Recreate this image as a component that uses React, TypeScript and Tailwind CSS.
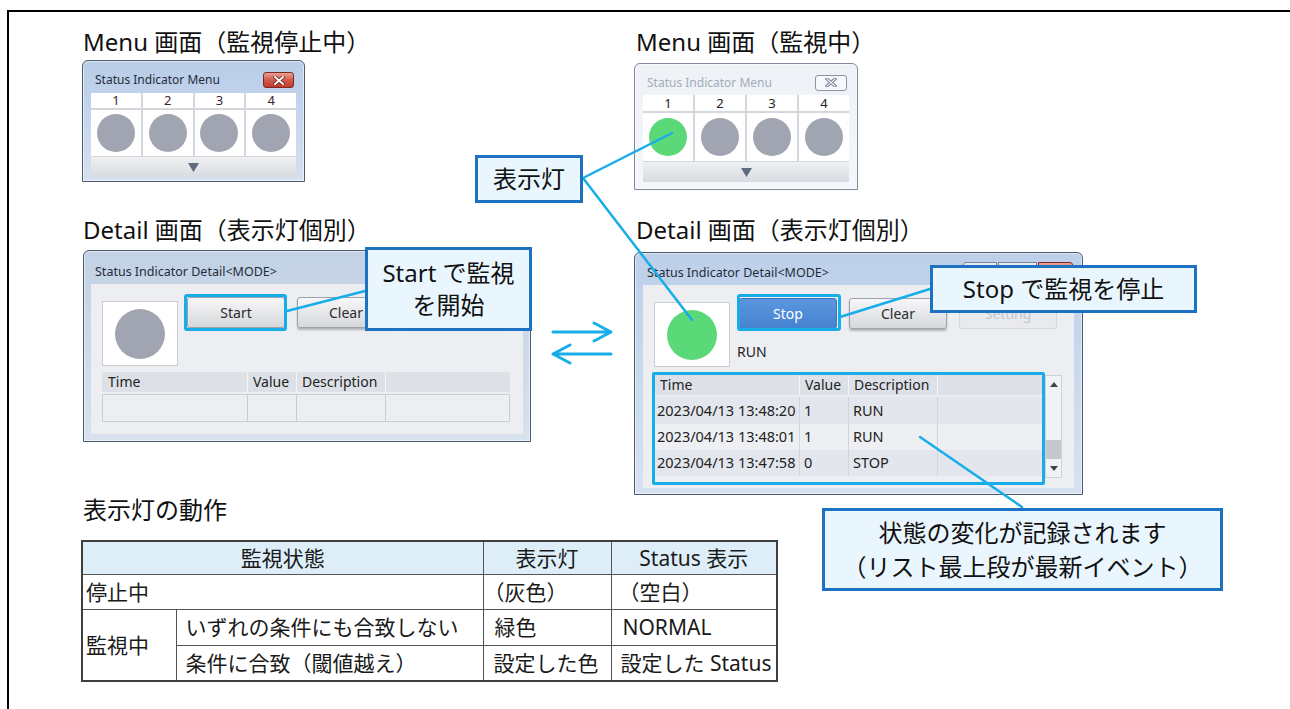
import React from "react";

function XGlyph({ inactive }: { inactive?: boolean }) {
  if (inactive) {
    return (
      <svg width="12" height="9" viewBox="0 0 12 9">
        <path d="M2 1 L10 8 M10 1 L2 8" stroke="#6f7a89" strokeWidth="3" strokeLinecap="square" fill="none" />
        <path d="M2 1 L10 8 M10 1 L2 8" stroke="#f4f6f9" strokeWidth="1.2" strokeLinecap="square" fill="none" />
      </svg>
    );
  }
  return (
    <svg width="12" height="9" viewBox="0 0 12 9">
      <path d="M2 1 L10 8 M10 1 L2 8" stroke="#5a1a14" strokeWidth="3.4" strokeLinecap="square" fill="none" />
      <path d="M2 1 L10 8 M10 1 L2 8" stroke="#ffffff" strokeWidth="2" strokeLinecap="square" fill="none" />
    </svg>
  );
}

function Down({ color = "#5e6a7e" }: { color?: string }) {
  return (
    <svg width="11" height="9" viewBox="0 0 11 9">
      <polygon points="0,0 11,0 5.5,9" fill={color} />
    </svg>
  );
}

function MenuWin({ inactive }: { inactive?: boolean }) {
  const frame = inactive
    ? "w-[224px] h-[127px] border-[#7d8796] bg-gradient-to-b from-[#eef2f7] to-[#f3f6fa] px-[8px] pb-[7px]"
    : "w-[223px] h-[122px] border-[#4d5a6d] bg-gradient-to-b from-[#b9cde8] to-[#d4e1f2] px-[8px] pb-[4px]";
  const numH = inactive ? "h-[16px] leading-[16px]" : "h-[15px] leading-[15px]";
  const circH = inactive ? "h-[48px]" : "h-[46px]";
  return (
    <div className={`flex flex-col rounded-t-[6px] border shadow-[inset_0_0_0_1px_rgba(255,255,255,0.55)] ${frame}`}>
      <div className={`${inactive ? "h-[31px] pt-[6px]" : "h-[32px] pt-[6px]"} flex items-center justify-between pl-[4px] pr-[2px]`}>
        <span className={`text-[12px] leading-[16px] ${inactive ? "text-[#a3acb8]" : "text-[#1f2c3d]"}`}>Status Indicator Menu</span>
        {inactive ? (
          <div className="w-[32px] h-[16px] rounded-[3px] border border-[#8b95a3] bg-[#f6f8fb] flex items-center justify-center">
            <XGlyph inactive />
          </div>
        ) : (
          <div className="w-[31px] h-[16px] rounded-[3px] border border-[#7d2a22] bg-gradient-to-b from-[#e9a195] via-[#d2594c] to-[#c23b2d] flex items-center justify-center">
            <XGlyph />
          </div>
        )}
      </div>
      <div className="flex flex-col bg-[#d4d7dc] gap-[1px]">
        <div className="grid grid-cols-4 gap-[2px]">
          {[1, 2, 3, 4].map((n) => (
            <div key={n} className="flex flex-col gap-[2px]">
              <div className={`${numH} bg-white text-center text-[13px] ${inactive ? "text-[#222]" : "text-[#3d2430]"}`}>{n}</div>
              <div className={`${circH} bg-white flex items-center justify-center`}>
                <div className={`w-[38px] h-[38px] rounded-full ${inactive && n === 1 ? "bg-[#5bd978]" : "bg-[#a0a5b1]"}`} />
              </div>
            </div>
          ))}
        </div>
        <div className="h-[20px] bg-gradient-to-b from-[#eef0f2] to-[#d8dbe0] flex items-center justify-center">
          <Down />
        </div>
      </div>
    </div>
  );
}

function Btn({ label, kind }: { label: string; kind: "normal" | "primary" | "disabled" }) {
  const cls =
    kind === "primary"
      ? "bg-gradient-to-b from-[#5a97de] to-[#4682d0] border-[#3d75bf] text-white"
      : kind === "disabled"
      ? "bg-[#e8eaee] border-[#d5d8dd] text-[#c2c6cd]"
      : "bg-gradient-to-b from-[#f7f7f8] to-[#d6d8dc] border-[#9ca2ab] text-[#2b2b2b] shadow-[0_2px_2px_rgba(0,0,0,0.25)]";
  return (
    <div className={`w-[98px] h-[31px] shrink-0 rounded-[3px] border flex items-center justify-center text-[14px] ${cls}`}>{label}</div>
  );
}

function Indicator({ green }: { green?: boolean }) {
  return (
    <div className="mt-[17px] w-[76px] h-[65px] shrink-0 bg-white border border-[#c9ccd1] flex items-center justify-center">
      <div className={`w-[50px] h-[50px] rounded-full ${green ? "bg-[#5bd978]" : "bg-[#a0a5b1]"}`} />
    </div>
  );
}

function Header({ last }: { last: string }) {
  return (
    <div className="flex h-[20px] bg-[#dde1e7] text-[14px] leading-[20px] text-[#222]">
      <div className="w-[146px] pl-[6px] border-r border-[#f3f4f7]">Time</div>
      <div className="w-[49px] pl-[5px] border-r border-[#f3f4f7]">Value</div>
      <div className="w-[89px] pl-[5px] border-r border-[#f3f4f7]">Description</div>
      <div className={last} />
    </div>
  );
}

function LeftDetail() {
  return (
    <div className="w-[448px] h-[192px] flex flex-col rounded-t-[6px] border border-[#4d5a6d] bg-gradient-to-b from-[#c2d1e4] to-[#d8e2ee] px-[7px] pb-[7px] shadow-[inset_0_0_0_1px_rgba(255,255,255,0.5)]">
      <div className="h-[33px] pt-[9px] flex items-center pl-[4px]">
        <span className="text-[12.5px] leading-[18px] text-[#1f2c3d]">Status Indicator Detail&lt;MODE&gt;</span>
      </div>
      <div className="flex-1 bg-[#eceef2] flex flex-col">
        <div className="flex items-start pl-[11px] h-[82px]">
          <Indicator />
          <div className="ml-[9px] mt-[13px] flex gap-[12px]">
            <Btn label="Start" kind="normal" />
            <Btn label="Clear" kind="normal" />
            <Btn label="" kind="normal" />
          </div>
        </div>
        <div className="ml-[11px] mt-[6px] w-[408px]">
          <Header last="flex-1" />
          <div className="mt-[2px] flex h-[28px] border border-[#c9cdd4] bg-[#eceef2]">
            <div className="w-[145px] border-r border-[#c9cdd4]" />
            <div className="w-[49px] border-r border-[#c9cdd4]" />
            <div className="w-[89px] border-r border-[#c9cdd4]" />
            <div className="flex-1" />
          </div>
        </div>
      </div>
    </div>
  );
}

const rows = [
  { t: "2023/04/13 13:48:20", v: "1", d: "RUN", bg: "bg-[#e3e6ec]" },
  { t: "2023/04/13 13:48:01", v: "1", d: "RUN", bg: "bg-[#edeff3]" },
  { t: "2023/04/13 13:47:58", v: "0", d: "STOP", bg: "bg-[#e3e6ec]" },
];

function RightDetail() {
  return (
    <div className="w-[449px] h-[243px] flex flex-col rounded-t-[6px] border border-[#4d5a6d] bg-gradient-to-b from-[#bdd0e9] to-[#d6e2f2] px-[8px] pb-[6px] shadow-[inset_0_0_0_1px_rgba(255,255,255,0.5)]">
      <div className="h-[32px] flex items-start justify-between">
        <span className="mt-[11px] pl-[4px] text-[12.5px] leading-[18px] text-[#1f2c3d]">Status Indicator Detail&lt;MODE&gt;</span>
        <div className="mt-[9px] mr-[1px] flex gap-[1px]">
          <div className="w-[34px] h-[18px] rounded-l-[3px] border border-[#7e8898] bg-gradient-to-b from-[#e8eef6] to-[#c9d6e6]" />
          <div className="w-[39px] h-[18px] border border-[#7e8898] bg-gradient-to-b from-[#e8eef6] to-[#c9d6e6]" />
          <div className="w-[35px] h-[18px] rounded-r-[3px] border border-[#7d2a22] bg-gradient-to-b from-[#e9a195] to-[#c23b2d]" />
        </div>
      </div>
      <div className="flex-1 bg-[#eceef2] flex flex-col">
        <div className="flex items-start pl-[11px] h-[82px]">
          <Indicator green />
          <div className="ml-[9px] mt-[13px] flex flex-col">
            <div className="flex gap-[12px]">
              <Btn label="Stop" kind="primary" />
              <Btn label="Clear" kind="normal" />
              <Btn label="Setting" kind="disabled" />
            </div>
            <div className="mt-[14px] ml-[-2px] text-[14px] leading-[18px] text-[#222]">RUN</div>
          </div>
        </div>
        <div className="ml-[11px] mt-[8px] w-[408px] h-[103px] flex">
          <div className="w-[391px] flex flex-col">
            <Header last="flex-1" />
            <div className="flex-1 flex flex-col pt-[2px] text-[14.5px] text-[#222]">
              {rows.map((r, i) => (
                <div key={i} className={`flex ${i === 0 ? "h-[27px]" : "h-[26px]"} items-center ${r.bg}`}>
                  <div className="w-[146px] h-full flex items-center pl-[3px] border-r border-[#d2d5db] whitespace-nowrap">{r.t}</div>
                  <div className="w-[49px] h-full flex items-center pl-[4px] border-r border-[#d2d5db]">{r.v}</div>
                  <div className="w-[89px] h-full flex items-center pl-[4px] border-r border-[#d2d5db]">{r.d}</div>
                  <div className="flex-1" />
                </div>
              ))}
            </div>
          </div>
          <div className="w-[17px] h-full border border-[#cfd3d9] bg-[#f1f2f4] flex flex-col">
            <div className="h-[17px] flex items-center justify-center">
              <svg width="8" height="5" viewBox="0 0 8 5"><polygon points="0,5 8,5 4,0" fill="#444" /></svg>
            </div>
            <div className="flex-1 flex flex-col">
              <div className="h-[47px]" />
              <div className="h-[19px] bg-[#c5c8ce]" />
            </div>
            <div className="h-[17px] flex items-center justify-center">
              <svg width="8" height="5" viewBox="0 0 8 5"><polygon points="0,0 8,0 4,5" fill="#444" /></svg>
            </div>
          </div>
        </div>
      </div>
    </div>
  );
}

function Title({ children, cls = "" }: { children: React.ReactNode; cls?: string }) {
  return <div className={`h-[30px] text-[24px] leading-[30px] whitespace-nowrap text-[#111] ${cls}`}>{children}</div>;
}

function BottomTable() {
  const b = "border border-[#555]";
  return (
    <table className="mt-[15px] ml-[-2px] w-[695px] table-fixed border-collapse border-2 border-[#3f3f3f] text-[21px] leading-[24px] text-[#1a1a1a]">
      <colgroup>
        <col className="w-[94px]" />
        <col className="w-[307px]" />
        <col className="w-[128px]" />
        <col className="w-[166px]" />
      </colgroup>
      <tbody>
        <tr className="h-[33px] bg-[#ddeef9]">
          <td colSpan={2} className={`${b} text-center`}>監視状態</td>
          <td className={`${b} text-center`}>表示灯</td>
          <td className={`${b} text-center`}>Status 表示</td>
        </tr>
        <tr className="h-[35px]">
          <td colSpan={2} className={`${b} pl-[3px]`}>停止中</td>
          <td className={`${b} pl-[0px]`}>（灰色）</td>
          <td className={`${b} pl-[7px]`}>（空白）</td>
        </tr>
        <tr className="h-[36px]">
          <td rowSpan={2} className={`${b} pl-[3px]`}>監視中</td>
          <td className={`${b} pl-[9px]`}>いずれの条件にも合致しない</td>
          <td className={`${b} pl-[11px]`}>緑色</td>
          <td className={`${b} pl-[11px]`}>NORMAL</td>
        </tr>
        <tr className="h-[36px]">
          <td className={`${b} pl-[9px]`}>条件に合致（閾値越え）</td>
          <td className={`${b} pl-[10px] whitespace-nowrap`}>設定した色</td>
          <td className={`${b} pl-[9px] whitespace-nowrap`}>設定した Status</td>
        </tr>
      </tbody>
    </table>
  );
}

function Overlay() {
  const c = "#17ade9";
  return (
    <div className="absolute inset-0 pointer-events-none">
      <svg className="absolute inset-0" width="1290" height="709" viewBox="0 0 1290 709">
        <g stroke={c} strokeWidth="2.5" strokeLinecap="round" fill="none">
          <path d="M583 178 L672 133" />
          <path d="M583 178 L692 320" />
          <path d="M287 311 L365 291" />
          <path d="M840 317 L930 289" />
          <path d="M920 437 L1022 507" />
        </g>
        <g stroke={c} strokeWidth="3" strokeLinecap="round" strokeLinejoin="round" fill="none">
          <path d="M553 332 L611 332 M594 323 L611 332 L594 341" />
          <path d="M553 354 L611 354 M570 345 L553 354 L570 363" />
        </g>
      </svg>
      <div className="absolute left-[184px] top-[294px] w-[103px] h-[37px] rounded-[3px] border-[3px] border-[#17ade9]" />
      <div className="absolute left-[737px] top-[294px] w-[104px] h-[37px] rounded-[3px] border-[3px] border-[#17ade9]" />
      <div className="absolute left-[652px] top-[372px] w-[393px] h-[113px] rounded-[2px] border-[3px] border-[#17ade9]" />

      <div className="absolute left-[475px] top-[155px] w-[108px] h-[48px] border-[3px] border-[#1d72c2] bg-[#eaf6fe] flex items-center justify-center text-[24px] leading-[30px] text-[#111]">表示灯</div>
      <div className="absolute left-[365px] top-[247px] w-[167px] h-[84px] border-[3px] border-[#1d72c2] bg-[#eaf6fe] flex flex-col items-center justify-center text-[24px] leading-[32px] text-[#111]">
        <span>Start で監視</span>
        <span>を開始</span>
      </div>
      <div className="absolute left-[930px] top-[265px] w-[267px] h-[48px] border-[3px] border-[#1d72c2] bg-[#eaf6fe] flex items-center justify-center text-[24px] leading-[30px] text-[#111]">Stop で監視を停止</div>
      <div className="absolute left-[822px] top-[508px] w-[401px] h-[83px] border-[3px] border-[#1d72c2] bg-[#eaf6fe] flex flex-col items-center justify-center text-[24px] leading-[34px] text-[#111]">
        <span>状態の変化が記録されます</span>
        <span>（リスト最上段が最新イベント）</span>
      </div>
    </div>
  );
}

export default function App() {
  return (
    <div className="relative w-[1290px] h-[709px] overflow-hidden bg-white [font-family:'Noto_Sans','Noto_Sans_CJK_JP',sans-serif]">
      <div className="ml-[7px] mt-[10px] h-[699px] border-l-2 border-t-2 border-black flex">
        <div className="w-[625px] shrink-0 pl-[74px] flex flex-col items-start">
          <Title cls="mt-[15px]">Menu 画面（監視停止中）</Title>
          <div className="mt-[3px] ml-[-1px]">
            <MenuWin />
          </div>
          <Title cls="mt-[33px]">Detail 画面（表示灯個別）</Title>
          <div className="mt-[5px]">
            <LeftDetail />
          </div>
          <Title cls="mt-[53px]">表示灯の動作</Title>
          <BottomTable />
        </div>
        <div className="flex flex-col items-start">
          <Title cls="mt-[15px] ml-[2px]">Menu 画面（監視中）</Title>
          <div className="mt-[6px]">
            <MenuWin inactive />
          </div>
          <Title cls="mt-[25px] ml-[2px]">Detail 画面（表示灯個別）</Title>
          <div className="mt-[7px]">
            <RightDetail />
          </div>
        </div>
      </div>
      <Overlay />
    </div>
  );
}
